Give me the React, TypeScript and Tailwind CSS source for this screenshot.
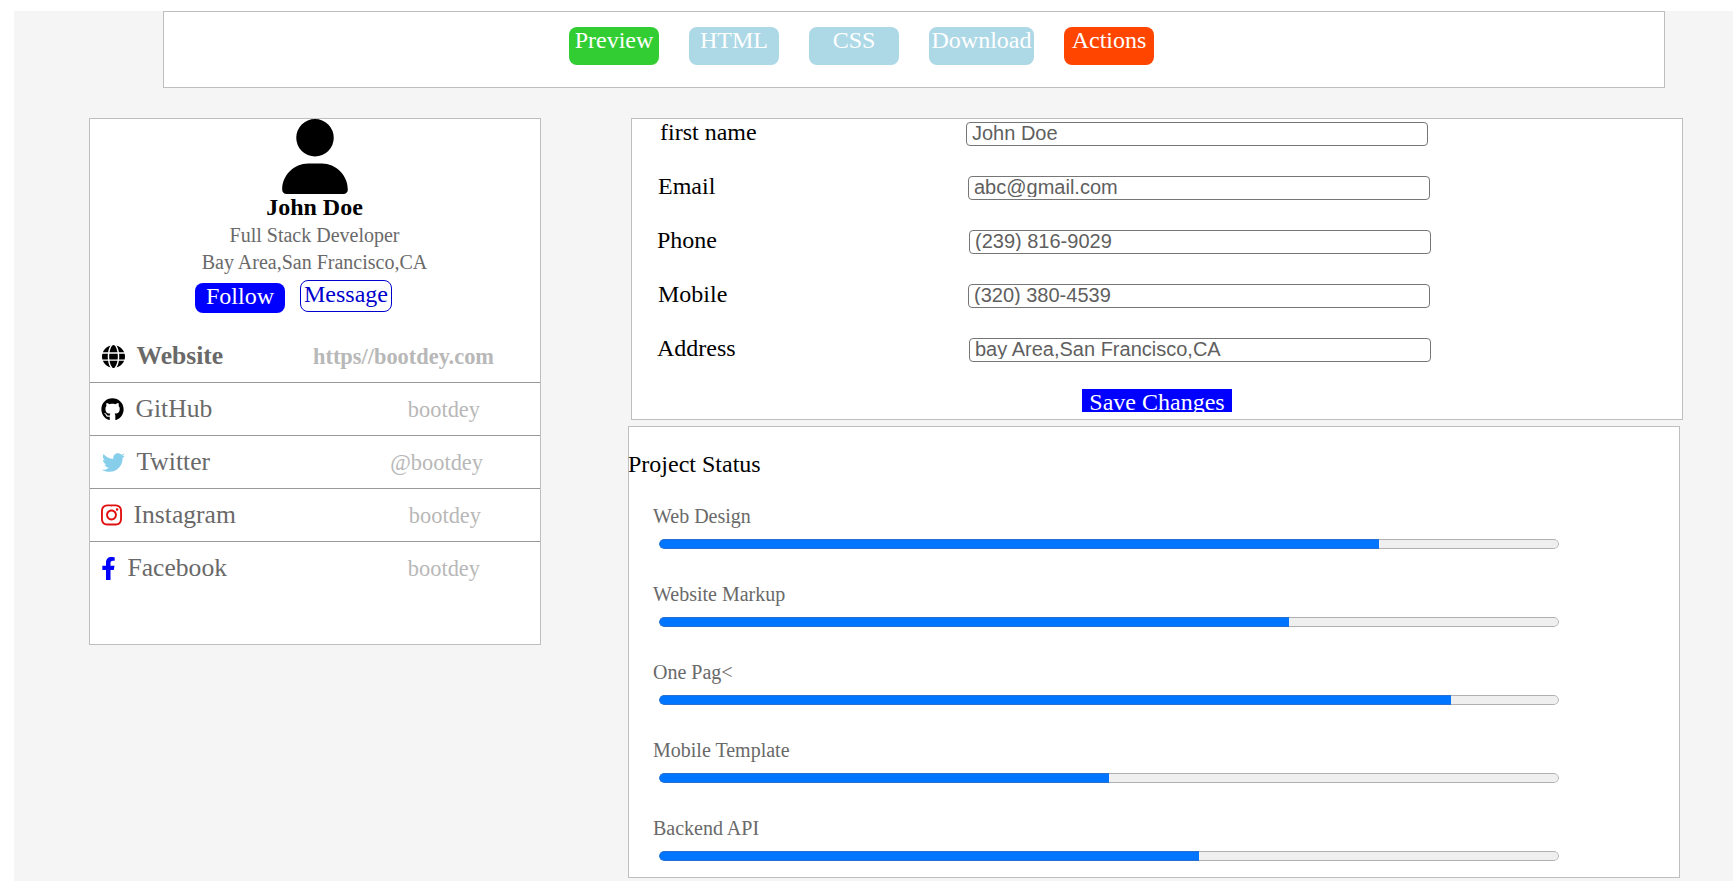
import React from "react";
import { FaGlobe, FaUser } from "react-icons/fa6";
import { FaFacebookF, FaGithub, FaInstagram, FaTwitter } from "react-icons/fa";

const tabs = [
  { label: "Preview", style: "w-[90px] bg-[#32cd32]" },
  { label: "HTML", style: "w-[90px] bg-[#add8e6]" },
  { label: "CSS", style: "w-[90px] bg-[#add8e6]" },
  { label: "Download", style: "w-[105px] bg-[#add8e6]" },
  { label: "Actions", style: "w-[90px] bg-[#ff4500]" },
];

const links = [
  { icon: <FaGlobe size={23} />, color: "w-6 text-black", label: "Website", value: "https//bootdey.com", row: "h-[53px] border-b font-bold", pad: "pr-[46px]" },
  { icon: <FaGithub className="h-[23px] w-[23px]" />, color: "w-[23px] text-black", label: "GitHub", value: "bootdey", row: "h-[53px] border-b", pad: "pr-[60px]" },
  { icon: <FaTwitter size={23} />, color: "w-6 text-[#87ceeb]", label: "Twitter", value: "@bootdey", row: "h-[53px] border-b", pad: "pr-[57px]" },
  { icon: <FaInstagram className="h-6 w-[21px]" />, color: "w-[21px] text-[#e01010]", label: "Instagram", value: "bootdey", row: "h-[53px] border-b", pad: "pr-[59px]" },
  { icon: <FaFacebookF className="h-[23px] w-[15px]" />, color: "w-[15px] text-[#0000ff]", label: "Facebook", value: "bootdey", row: "h-[52px]", pad: "pr-[60px]" },
];

const fields = [
  { label: "first name", value: "John Doe", pad: "pl-7", box: "w-[306px]" },
  { label: "Email", value: "abc@gmail.com", pad: "pl-[26px]", box: "w-[310px]" },
  { label: "Phone", value: "(239) 816-9029", pad: "pl-[25px]", box: "w-[312px]" },
  { label: "Mobile", value: "(320) 380-4539", pad: "pl-[26px]", box: "w-[310px]" },
  { label: "Address", value: "bay Area,San Francisco,CA", pad: "pl-[25px]", box: "w-[312px]" },
];

const projects = [
  { label: "Web Design", percent: 80 },
  { label: "Website Markup", percent: 70 },
  { label: "One Pag<", percent: 88 },
  { label: "Mobile Template", percent: 50 },
  { label: "Backend API", percent: 60 },
];

function Header() {
  return (
    <header className="ml-[149px] flex h-[77px] w-[1502px] gap-[30px] border border-[#bebebe] bg-white pt-[15px] pl-[405px]">
      {tabs.map((tab) => (
        <button key={tab.label} className={`flex h-[38px] items-start justify-center rounded-lg text-2xl leading-[27px] text-white ${tab.style}`}>
          {tab.label}
        </button>
      ))}
    </header>
  );
}

function ProfileCard() {
  return (
    <section className="h-[527px] w-[452px] border border-[#bebebe] bg-white">
      <div className="flex flex-col items-center pr-px">
        <FaUser className="h-[75px] w-[66px] text-black" />
        <h2 className="h-7 text-2xl leading-[27px] font-bold text-black">John Doe</h2>
        <p className="h-[27px] text-xl leading-[27px] text-[#696969]">Full Stack Developer</p>
        <p className="h-[27px] text-xl leading-[27px] text-[#696969]">Bay Area,San Francisco,CA</p>
      </div>
      <div className="mt-1 flex gap-[15px] pl-[105px]">
        <button className="mt-[3px] h-[30px] w-[90px] rounded-lg bg-[#0000ff] pb-1 text-2xl leading-[26px] text-white">Follow</button>
        <button className="h-8 w-[92px] rounded-lg border border-[#0000cd] pb-1 text-2xl leading-[26px] text-[#0000cd]">Message</button>
      </div>
      <ul className="mt-[17px]">
        {links.map((link) => (
          <li key={link.label} className={`flex items-center border-[#999999] pl-[11px] ${link.row}`}>
            <span className={`flex justify-center ${link.color}`}>{link.icon}</span>
            <span className="ml-[11.5px] text-[25.6px] leading-[28px] text-[#696969]">{link.label}</span>
            <span className={`ml-auto pt-0.5 text-[22.4px] leading-[28px] text-[#b8b8b8] ${link.pad}`}>{link.value}</span>
          </li>
        ))}
      </ul>
    </section>
  );
}

function DetailsForm() {
  return (
    <section className="ml-[3px] h-[302px] w-[1052px] border border-[#bebebe] bg-white">
      {fields.map((field) => (
        <div key={field.label} className={`flex h-[54px] items-start ${field.pad}`}>
          <label className={`text-2xl leading-[27px] text-black ${field.box}`}>{field.label}</label>
          <div className="mt-[3px] h-6 w-[462px] rounded-[4px] border border-[#767676] bg-white pl-[5px] font-['Liberation_Sans',Arial,sans-serif]">
            <div className="h-5 overflow-hidden text-xl leading-5 text-[#5f5f5f]">{field.value}</div>
          </div>
        </div>
      ))}
      <button className="ml-[450px] block h-[23px] w-[150px] overflow-hidden bg-[#0000ff] text-2xl leading-[27px] text-white">
        Save Changes
      </button>
    </section>
  );
}

function ProgressBar({ percent }: { percent: number }) {
  return (
    <div className="ml-1.5 flex h-2.5 w-[900px] overflow-hidden rounded-full">
      <div className="rounded-l-full border-y border-l border-[#2a70cf] bg-[#0075ff]" style={{ width: `${percent}%` }} />
      <div className="flex-1 rounded-r-full border-y border-r border-[#b0b0b0] bg-[#efefef]" />
    </div>
  );
}

function ProjectStatus() {
  return (
    <section className="mt-1.5 h-[452px] w-[1052px] border border-[#bebebe] bg-white pt-6">
      <h3 className="-ml-px text-2xl leading-[27px] text-black">Project Status</h3>
      <div className="mt-[27px] flex flex-col pl-6">
        {projects.map((project) => (
          <div key={project.label} className="h-[78px]">
            <p className="mb-[11px] text-xl leading-[23px] text-[#696969]">{project.label}</p>
            <ProgressBar percent={project.percent} />
          </div>
        ))}
      </div>
    </section>
  );
}

export default function App() {
  return (
    <div className="h-[886px] overflow-hidden bg-white pt-[11px] pl-3.5 font-['Liberation_Serif','Times_New_Roman',serif]">
      <main className="h-[870px] bg-[#f5f5f5]">
        <Header />
        <div className="mt-[30px] flex items-start pl-[75px]">
          <ProfileCard />
          <div className="ml-[87px] flex flex-col">
            <DetailsForm />
            <ProjectStatus />
          </div>
        </div>
      </main>
    </div>
  );
}
